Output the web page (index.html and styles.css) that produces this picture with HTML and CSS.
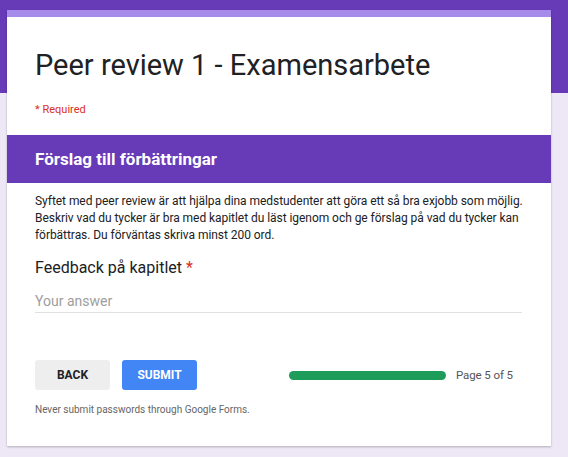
FILE: index.html
```html
<!DOCTYPE html>
<html>

<head lang="sv">
    <meta charset="UTF-8">
    <title>Peer review 1 - Examensarbete</title>
    <link rel="stylesheet" href="styles.css">
</head>

<body>
    <div class="page">
        <div class="card head">
            <h1 class="title">Peer review 1 - Examensarbete</h1>
            <div class="required">* Required</div>
        </div>

        <div class="card section">
            <div class="section-title">Förslag till förbättringar</div>
            <div class="section-body">
                <p class="desc">Syftet med peer review är att hjälpa dina medstudenter att göra ett så bra exjobb som möjlig. Beskriv vad du tycker är bra med kapitlet du läst igenom och ge förslag på vad du tycker kan förbättras. Du förväntas skriva minst 200 ord.</p>

                <div class="question">
                    <div class="q-label">Feedback på kapitlet <span class="star">*</span></div>
                    <div class="answer">Your answer</div>
                </div>

                <div class="nav">
                    <span class="btn back">BACK</span>
                    <span class="btn submit">SUBMIT</span>
                    <div class="progress">
                        <div class="bar"></div>
                        <span class="page-no">Page 5 of 5</span>
                    </div>
                </div>

                <div class="note">Never submit passwords through Google Forms.</div>
            </div>
        </div>
    </div>
</body>

</html>
```

FILE: styles.css
```css
body,
h1,
p {
    margin: 0;
    padding: 0;
}

body {
    font-family: Roboto, "Liberation Sans", Arial, sans-serif;
    color: #202124;
    background: linear-gradient(#673ab7 0, #673ab7 93px, #ede7f6 93px);
    height: 457px;
    overflow: hidden;
}

.page {
    width: 544px;
    padding: 10px 0 0 7px;
}

.card {
    background: #fff;
    box-shadow: 0 1px 2px rgba(0, 0, 0, 0.25);
}

.head {
    border-top: 7px solid #a78bea;
    padding: 29px 28px 0;
    height: 125px;
    box-sizing: border-box;
}

.title {
    font-size: 29px;
    font-weight: 400;
    line-height: 38px;
    color: #202124;
}

.required {
    margin-top: 19px;
    font-size: 11px;
    color: #d93025;
}

.section-title {
    background: #673ab7;
    color: #fff;
    font-size: 17px;
    font-weight: 700;
    height: 48px;
    line-height: 48px;
    padding: 0 28px;
}

.section-body {
    padding: 10px 28px 0;
    height: 263px;
    box-sizing: border-box;
}

.desc {
    font-size: 12px;
    line-height: 17px;
    letter-spacing: -0.05px;
}

.question {
    margin-top: 13px;
}

.q-label {
    font-size: 16px;
    line-height: 22px;
}

.star {
    color: #d93025;
}

.answer {
    margin-top: 12px;
    width: 487px;
    font-size: 14px;
    line-height: 20px;
    color: #9e9e9e;
    border-bottom: 1px solid #e0e0e0;
    padding-bottom: 1px;
}

.nav {
    margin-top: 47px;
    display: flex;
    align-items: center;
}

.btn {
    width: 75px;
    height: 30px;
    line-height: 30px;
    text-align: center;
    font-size: 12px;
    font-weight: 700;
    border-radius: 3px;
}

.back {
    background: #eee;
    color: #202124;
}

.submit {
    margin-left: 12px;
    background: #4285f4;
    color: #fff;
}

.progress {
    margin-left: 92px;
    display: flex;
    align-items: center;
}

.bar {
    width: 157px;
    height: 9px;
    border-radius: 5px;
    background: #1e9c5a;
}

.page-no {
    margin-left: 10px;
    font-size: 11.5px;
    letter-spacing: -0.1px;
    color: #555;
}

.note {
    margin-top: 14px;
    font-size: 10px;
    color: #666;
}
```
